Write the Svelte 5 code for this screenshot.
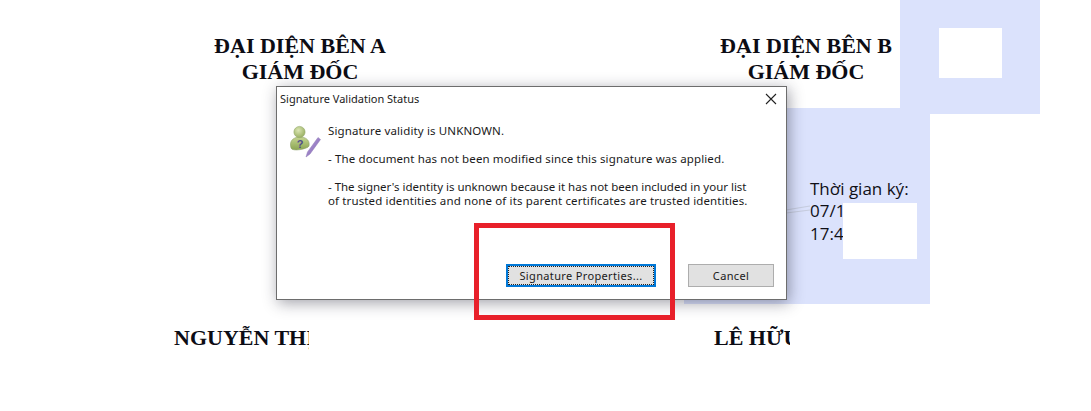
<script>
  const sides = [
    { heading: 'ĐẠI DIỆN BÊN A', role: 'GIÁM ĐỐC' },
    { heading: 'ĐẠI DIỆN BÊN B', role: 'GIÁM ĐỐC' }
  ];
</script>

<div class="page">
  <!-- signature field tint behind the text -->
  <div class="tint tint-top"></div>
  <div class="tint tint-main"></div>
  <div class="mask mask-top"></div>

  <div class="doc">
    <div class="heads">
      {#each sides as side}
        <div class="head">
          <div>{side.heading}</div>
          <div>{side.role}</div>
        </div>
      {/each}
    </div>
    <div class="signers">
      <div class="signer first">NGUYỄN THỊ</div>
      <div class="signer second">LÊ HỮU</div>
    </div>
  </div>

  <div class="sign-time">
    <div>Thời gian ký:</div>
    <div>07/1</div>
    <div>17:40</div>
  </div>
  <svg class="sign-lines" width="40" height="14" viewBox="0 0 40 14">
    <path d="M0 8L24 4M0 11L24 8" stroke="#b9bdc9" stroke-width="0.6" fill="none" />
  </svg>

  <div class="mask mask-time"></div>
  <div class="mask mask-name-a"></div>
  <div class="mask mask-name-b"></div>

  <div class="dialog">
    <div class="titlebar">
      <span>Signature Validation Status</span>
      <svg class="close" width="12" height="12" viewBox="0 0 12 12">
        <path d="M1 1L11 11M11 1L1 11" stroke="#222" stroke-width="1.1" fill="none" />
      </svg>
    </div>
    <div class="body">
      <svg class="icon" width="36" height="36" viewBox="0 0 36 36">
        <defs>
          <radialGradient id="head-fill" cx="0.4" cy="0.35" r="0.7">
            <stop offset="0" stop-color="#dbe6b4" />
            <stop offset="1" stop-color="#96ad5e" />
          </radialGradient>
          <linearGradient id="body-fill" x1="0" y1="0" x2="0" y2="1">
            <stop offset="0" stop-color="#c5d592" />
            <stop offset="1" stop-color="#8ba552" />
          </linearGradient>
          <linearGradient id="pen-fill" x1="0" y1="0" x2="1" y2="1">
            <stop offset="0" stop-color="#b9a3dc" />
            <stop offset="1" stop-color="#7d5fb0" />
          </linearGradient>
        </defs>
        <path d="M4 25c-2-7 2-10 7-11h4c5 1 8 4 7 9-1 3-17 6-18 2z" fill="url(#body-fill)" stroke="#8b9f66" stroke-width="0.6" />
        <circle cx="12.5" cy="9" r="5.6" fill="url(#head-fill)" stroke="#93a96a" stroke-width="0.6" />
        <text x="13" y="25" class="qmark">?</text>
        <path d="M19 34l1.5-5L31 14.5l2.5 2L23 31z" fill="url(#pen-fill)" stroke="#8e78b6" stroke-width="0.5" />
      </svg>
      <div class="message">
        <p>Signature validity is UNKNOWN.</p>
        <p>- The document has not been modified since this signature was applied.</p>
        <p><span class="tight">- The signer's identity is unknown because it has not been included in your list</span><br />of trusted identities and none of its parent certificates are trusted identities.</p>
      </div>
    </div>
    <div class="actions">
      <button class="btn primary"><span>Signature Properties...</span></button>
      <button class="btn">Cancel</button>
    </div>
  </div>

  <div class="highlight"></div>
</div>

<style>
  :global(body) {
    margin: 0;
    background: #fff;
  }

  .page {
    position: relative;
    width: 1091px;
    height: 411px;
    overflow: hidden;
    background: #fff;
  }

  .tint {
    position: absolute;
    background: #dbe2fc;
  }

  .tint-top {
    left: 900px;
    top: 0;
    width: 140px;
    height: 114px;
  }

  .tint-main {
    left: 684px;
    top: 108px;
    width: 246px;
    height: 196px;
  }

  .mask {
    position: absolute;
    background: #fff;
  }

  .mask-top {
    left: 939px;
    top: 28px;
    width: 63px;
    height: 50px;
  }

  .mask-time {
    left: 843px;
    top: 203px;
    width: 74px;
    height: 56px;
  }

  .mask-name-a {
    left: 309px;
    top: 314px;
    width: 123px;
    height: 40px;
  }

  .mask-name-b {
    left: 790px;
    top: 318px;
    width: 30px;
    height: 40px;
  }

  .doc {
    position: relative;
    font-family: "Liberation Serif", "Times New Roman", serif;
    font-weight: bold;
    color: #0c0c14;
    font-size: 22px;
    padding-top: 33px;
  }

  .heads {
    display: grid;
    grid-template-columns: 600px 412px;
    line-height: 26px;
    text-align: center;
  }

  .signers {
    display: grid;
    grid-template-columns: 600px 412px;
    margin-top: 240px;
    line-height: 26px;
  }

  .signer.first {
    padding-left: 174px;
  }

  .signer.second {
    padding-left: 114px;
  }

  .sign-time {
    position: absolute;
    left: 810px;
    top: 178px;
    font-family: "Open Sans", "Noto Sans", sans-serif;
    font-size: 17px;
    line-height: 22.4px;
    color: #0f0f16;
  }

  .sign-lines {
    position: absolute;
    left: 786px;
    top: 202px;
  }

  .dialog {
    position: absolute;
    left: 276px;
    top: 86px;
    width: 509px;
    height: 212px;
    display: flex;
    flex-direction: column;
    background: #fff;
    border: 1px solid #6d6d6d;
    box-shadow: 2px 3px 14px rgba(30, 30, 50, 0.42);
    font-family: "Noto Sans", "Open Sans", sans-serif;
    font-size: 11.5px;
    color: #1a1a1a;
  }

  .titlebar {
    display: flex;
    justify-content: space-between;
    align-items: center;
    height: 23px;
    padding: 0 9px 2px 3px;
    font-size: 11px;
  }

  .close {
    display: block;
  }

  .body {
    display: flex;
    align-items: flex-start;
    flex: 1;
    padding: 11px 0 0 11px;
    gap: 5px;
  }

  .icon {
    margin-top: 0;
    margin-left: -1px;
    flex: none;
  }

  .qmark {
    font-family: "Liberation Sans", sans-serif;
    font-weight: bold;
    font-size: 11px;
    fill: #4f4d8c;
    text-anchor: middle;
  }

  .message {
    letter-spacing: 0.13px;
    line-height: 14px;
    padding-top: 1px;
  }

  .message .tight {
    letter-spacing: -0.02px;
  }

  .message p {
    margin: 0 0 14px;
  }

  .actions {
    display: flex;
    justify-content: flex-end;
    gap: 32px;
    padding: 0 12px 12px 0;
  }

  .btn {
    box-sizing: border-box;
    width: 86px;
    height: 23px;
    padding: 0;
    background: #e1e1e1;
    border: 1px solid #adadad;
    font: inherit;
    font-size: 11px;
    letter-spacing: 0.35px;
    color: #1a1a1a;
  }

  .btn.primary {
    width: 150px;
    border: 2px solid #0078d7;
    padding: 0;
  }

  .btn.primary span {
    display: block;
    height: 100%;
    box-sizing: border-box;
    line-height: 17px;
    border: 1px dotted #222;
  }

  .highlight {
    position: absolute;
    left: 474px;
    top: 223px;
    width: 191px;
    height: 87px;
    border: 5px solid #e8202a;
  }
</style>
